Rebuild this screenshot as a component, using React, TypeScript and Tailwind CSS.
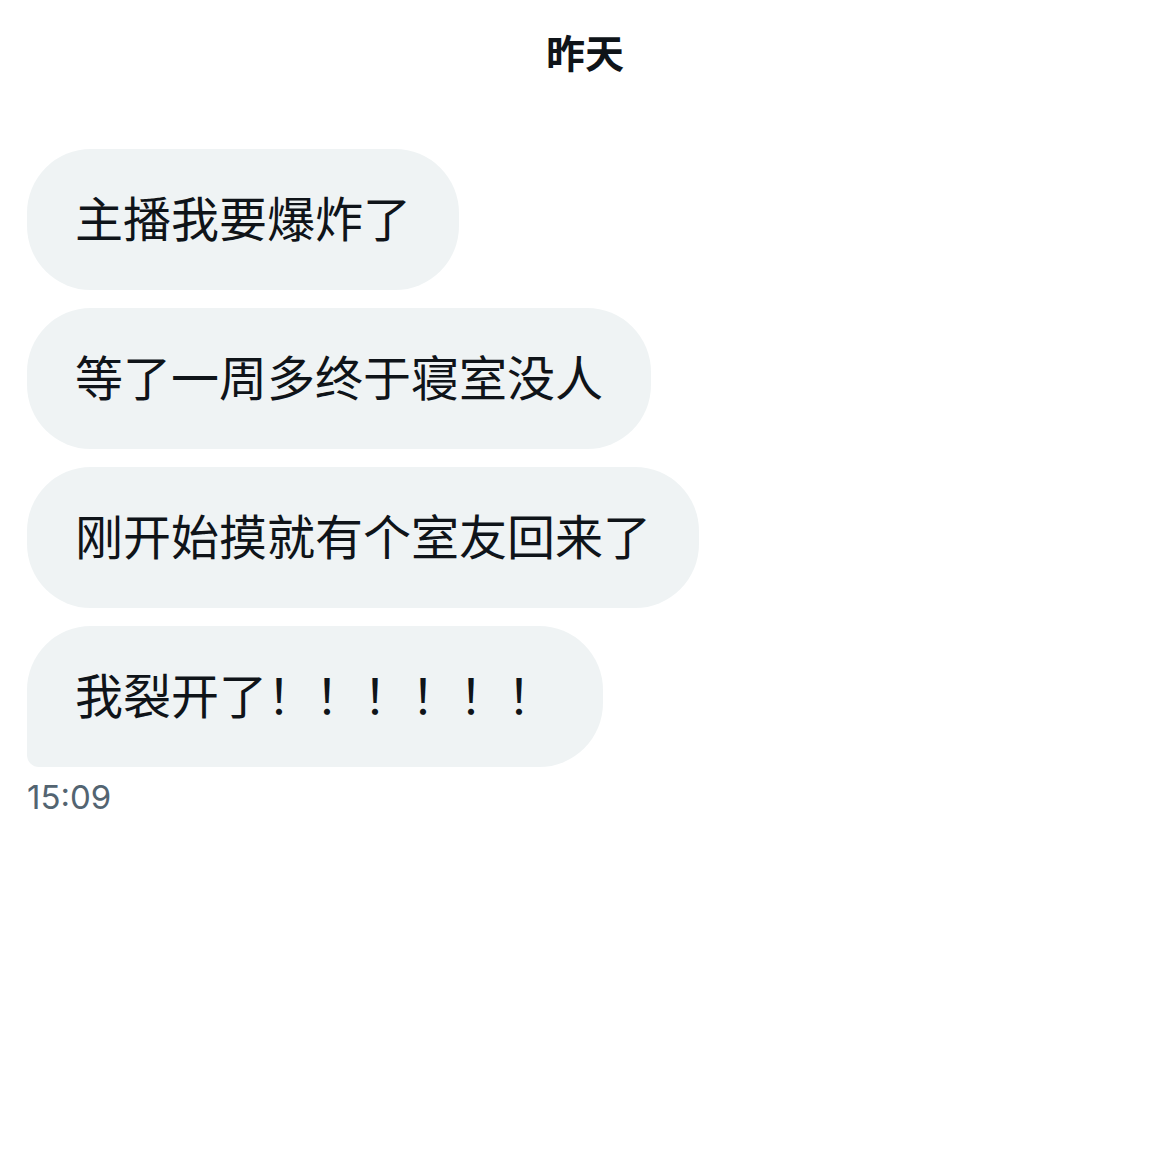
const messages = [
  "主播我要爆炸了",
  "等了一周多终于寝室没人",
  "刚开始摸就有个室友回来了",
  "我裂开了！！！！！！",
];

export default function App() {
  return (
    <main
      lang="zh-CN"
      className="flex min-h-screen flex-col bg-white px-[27px] pt-[23px] font-['Noto_Sans_CJK_SC',sans-serif] text-[#0f1419]"
    >
      <h1 className="text-center text-[39px] leading-[56px] font-bold">昨天</h1>
      <ul className="mt-[70px] flex flex-col items-start gap-[18px]">
        {messages.map((message, i) => (
          <li
            key={message}
            className={
              i === messages.length - 1
                ? "rounded-[64px] rounded-bl-[12px] bg-[#eff3f4] px-[48px] pt-[31px] pb-[38px] text-[48px] leading-[72px]"
                : "rounded-[64px] bg-[#eff3f4] px-[48px] pt-[31px] pb-[38px] text-[48px] leading-[72px]"
            }
          >
            {message}
          </li>
        ))}
      </ul>
      <time
        dateTime="15:09"
        className="mt-[10px] font-[Inter,sans-serif] text-[33px] leading-[40px] text-[#536471]"
      >
        15:09
      </time>
    </main>
  );
}
